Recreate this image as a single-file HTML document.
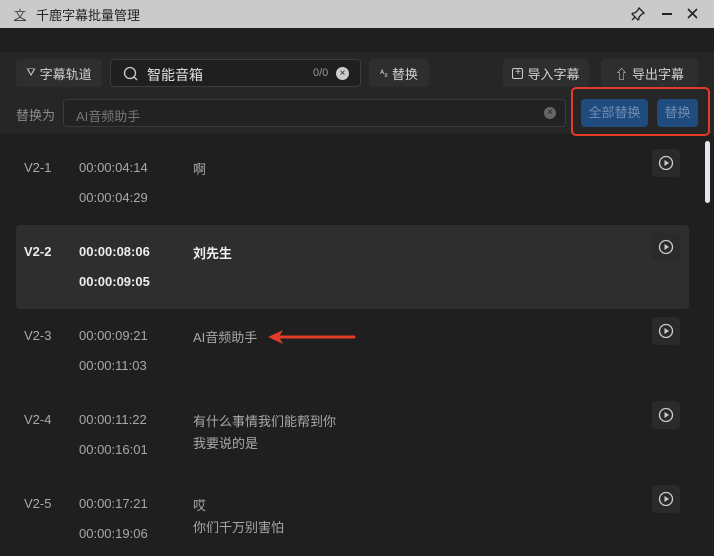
<!DOCTYPE html>
<html><head><meta charset="utf-8"><style>
*{margin:0;padding:0;box-sizing:border-box}
body{width:714px;height:556px;overflow:hidden;background:#1f1f1f;font-family:"Liberation Sans","Noto Sans CJK SC",sans-serif;font-size:13px;color:#c8c8c8;position:relative}
.a{position:absolute}
.title{left:0;top:0;width:714px;height:28px;background:#cacaca;color:#222}
.btn{background:#2e2e2e;border-radius:4px;color:#d0d0d0;display:flex;align-items:center;justify-content:center;gap:4px;height:28px;top:59px;font-size:13px}
.t{color:#a8a8a8}
.play{width:28px;height:28px;background:#2a2a2a;border-radius:4px;left:652px;display:flex;align-items:center;justify-content:center}
</style></head><body>
<div class="a title">
 <span class="a" style="left:14px;top:6px;font-size:12px;color:#444;text-decoration:underline">文</span>
 <span class="a" style="left:36px;top:5px;font-size:13px">千鹿字幕批量管理</span>
 <svg class="a" style="left:630px;top:6px" width="16" height="16" viewBox="0 0 16 16" fill="none" stroke="#222" stroke-width="1.3"><path d="M9 2l5 5-2 1-3 3v2l-1 1-6-6 1-1h2l3-3z M5 11l-3 3"/></svg>
 <div class="a" style="left:662px;top:13px;width:10px;height:2px;background:#222"></div>
 <svg class="a" style="left:687px;top:8px" width="11" height="11" viewBox="0 0 11 11" stroke="#222" stroke-width="1.6"><path d="M1 1l9 9M10 1l-9 9"/></svg>
</div>
<div class="a" style="left:0;top:52px;width:714px;height:82px;background:#262626"></div>
<div class="a btn" style="left:16px;width:86px"><span style="font-size:11px">⛛</span>字幕轨道</div>
<div class="a" style="left:110px;top:59px;width:251px;height:28px;border:1px solid #3c3c3c;border-radius:4px;background:#1f1f1f">
 <svg class="a" style="left:12px;top:6px" width="15" height="15" viewBox="0 0 15 15" fill="none" stroke="#ccc" stroke-width="1.3"><circle cx="7" cy="7" r="5.5"/><path d="M11 11l3 3"/></svg>
 <span class="a" style="left:36px;top:5px;color:#e0e0e0;font-size:14px">智能音箱</span>
 <span class="a" style="left:202px;top:7px;font-size:11px;color:#999">0/0</span>
 <div class="a" style="left:225px;top:7px;width:13px;height:13px;border-radius:50%;background:#ccc;color:#222;font-size:10px;line-height:13px;text-align:center">×</div>
</div>
<div class="a btn" style="left:369px;width:60px"><span style="font-size:9px">ᴬ₈</span>替换</div>
<div class="a btn" style="left:503px;width:86px"><span style="display:inline-block;width:11px;height:11px;border:1.5px solid #ccc;border-radius:2px;font-size:10px;line-height:8px;text-align:center">+</span>导入字幕</div>
<div class="a btn" style="left:601px;width:97px"><span>⇧</span>导出字幕</div>
<span class="a" style="left:16px;top:105px;color:#8a8a8a">替换为</span>
<div class="a" style="left:63px;top:99px;width:503px;height:28px;border:1px solid #3a3a3a;border-radius:4px;background:#222">
 <span class="a" style="left:12px;top:6px;color:#777">AI音频助手</span>
 <div class="a" style="left:480px;top:7px;width:12px;height:12px;border-radius:50%;background:#666;color:#222;font-size:10px;line-height:12px;text-align:center">×</div>
</div>
<div class="a" style="left:571px;top:87px;width:139px;height:49px;border:2px solid #e03c28;border-radius:5px"></div>
<div class="a" style="left:581px;top:99px;width:67px;height:28px;background:#1f4b7e;border-radius:4px;color:#6f8db5;text-align:center;line-height:28px">全部替换</div>
<div class="a" style="left:657px;top:99px;width:41px;height:28px;background:#1f4b7e;border-radius:4px;color:#6f8db5;text-align:center;line-height:28px">替换</div>
<div class="a" style="left:705px;top:141px;width:5px;height:62px;background:#e6e6ee;border-radius:3px"></div>
<div class="a" style="left:16px;top:225px;width:673px;height:84px;background:#2e2e2e;border-radius:4px"></div>

<div class="a t" style="left:24px;top:160px">V2-1</div><div class="a t" style="left:79px;top:160px">00:00:04:14</div><div class="a t" style="left:79px;top:190px">00:00:04:29</div><div class="a t" style="left:193px;top:159px">啊</div>
<div class="a" style="left:24px;top:244px;color:#eee;font-weight:bold">V2-2</div><div class="a" style="left:79px;top:244px;color:#eee;font-weight:bold">00:00:08:06</div><div class="a" style="left:79px;top:274px;color:#eee;font-weight:bold">00:00:09:05</div><div class="a" style="left:193px;top:243px;color:#eee;font-weight:bold">刘先生</div>
<div class="a t" style="left:24px;top:328px">V2-3</div><div class="a t" style="left:79px;top:328px">00:00:09:21</div><div class="a t" style="left:79px;top:358px">00:00:11:03</div><div class="a t" style="left:193px;top:327px">AI音频助手</div>
<svg class="a" style="left:266px;top:328px" width="92" height="18" viewBox="0 0 92 18"><path d="M88 9H10" stroke="#e03c28" stroke-width="3" stroke-linecap="round"/><path d="M2 9l15-7-4 7 4 7z" fill="#e03c28"/></svg>
<div class="a t" style="left:24px;top:412px">V2-4</div><div class="a t" style="left:79px;top:412px">00:00:11:22</div><div class="a t" style="left:79px;top:442px">00:00:16:01</div><div class="a t" style="left:193px;top:411px">有什么事情我们能帮到你</div><div class="a t" style="left:193px;top:433px">我要说的是</div>
<div class="a t" style="left:24px;top:496px">V2-5</div><div class="a t" style="left:79px;top:496px">00:00:17:21</div><div class="a t" style="left:79px;top:526px">00:00:19:06</div><div class="a t" style="left:193px;top:495px">哎</div><div class="a t" style="left:193px;top:517px">你们千万别害怕</div>

<div class="a play" style="top:149px"><svg width="16" height="16" viewBox="0 0 16 16"><circle cx="8" cy="8" r="6.5" fill="none" stroke="#ccc" stroke-width="1.3"/><path d="M6.5 5v6l4.5-3z" fill="#ccc"/></svg></div>
<div class="a play" style="top:233px"><svg width="16" height="16" viewBox="0 0 16 16"><circle cx="8" cy="8" r="6.5" fill="none" stroke="#ccc" stroke-width="1.3"/><path d="M6.5 5v6l4.5-3z" fill="#ccc"/></svg></div>
<div class="a play" style="top:317px"><svg width="16" height="16" viewBox="0 0 16 16"><circle cx="8" cy="8" r="6.5" fill="none" stroke="#ccc" stroke-width="1.3"/><path d="M6.5 5v6l4.5-3z" fill="#ccc"/></svg></div>
<div class="a play" style="top:401px"><svg width="16" height="16" viewBox="0 0 16 16"><circle cx="8" cy="8" r="6.5" fill="none" stroke="#ccc" stroke-width="1.3"/><path d="M6.5 5v6l4.5-3z" fill="#ccc"/></svg></div>
<div class="a play" style="top:485px"><svg width="16" height="16" viewBox="0 0 16 16"><circle cx="8" cy="8" r="6.5" fill="none" stroke="#ccc" stroke-width="1.3"/><path d="M6.5 5v6l4.5-3z" fill="#ccc"/></svg></div>
</body></html>
